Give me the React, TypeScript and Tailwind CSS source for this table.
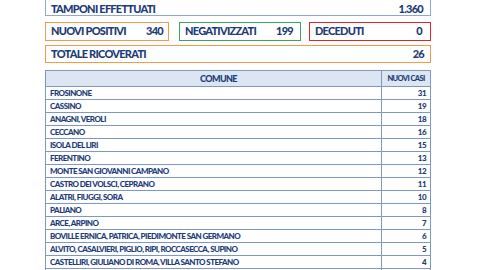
import React from "react";

const rows: [string, string][] = [
  ["FROSINONE", "31"],
  ["CASSINO", "19"],
  ["ANAGNI, VEROLI", "18"],
  ["CECCANO", "16"],
  ["ISOLA DEL LIRI", "15"],
  ["FERENTINO", "13"],
  ["MONTE SAN GIOVANNI CAMPANO", "12"],
  ["CASTRO DEI VOLSCI, CEPRANO", "11"],
  ["ALATRI, FIUGGI, SORA", "10"],
  ["PALIANO", "8"],
  ["ARCE, ARPINO", "7"],
  ["BOVILLE ERNICA, PATRICA, PIEDIMONTE SAN GERMANO", "6"],
  ["ALVITO, CASALVIERI, PIGLIO, RIPI, ROCCASECCA, SUPINO", "5"],
  ["CASTELLIRI, GIULIANO DI ROMA, VILLA SANTO STEFANO", "4"],
  ["BELMONTE CASTELLO, CASTROCIELO, COLFELICE, PICO, POFI, SANT'ELIA FIUMERAPIDO", "3"],
];

const font = { fontFamily: "Lato, 'Open Sans', sans-serif" };

export default function App() {
  return (
    <div
      className="w-[480px] h-[270px] overflow-hidden bg-white text-[#1d3b78] font-black"
      style={font}
    >
      <div className="ml-[45px] w-[386px] flex flex-col">
        <div className="mt-[-6px] h-[22px] border border-[#8ea9cf] flex items-center justify-between pt-[8px] pl-[5px] pr-[7px] text-[11px] tracking-[-0.75px]">
          <span>TAMPONI EFFETTUATI</span>
          <span>1.360</span>
        </div>
        <div className="mt-[6px] h-[19px] flex text-[11px] tracking-[-0.75px]">
          <div className="w-[124px] border border-[#f59a4a] flex items-center pl-[5px]">
            <span className="w-[95px]">NUOVI POSITIVI</span>
            <span>340</span>
          </div>
          <div className="ml-[10px] w-[122px] border border-[#3aa55e] flex items-center justify-between pl-[5px] pr-[7px]">
            <span>NEGATIVIZZATI</span>
            <span>199</span>
          </div>
          <div className="ml-[8px] w-[122px] border border-[#e0262c] flex items-center justify-between pl-[5px] pr-[8px]">
            <span>DECEDUTI</span>
            <span>0</span>
          </div>
        </div>
        <div className="mt-[4px] h-[18px] border border-[#f59a4a] flex items-center justify-between pl-[5px] pr-[6px] text-[11px] tracking-[-0.75px]">
          <span>TOTALE RICOVERATI</span>
          <span>26</span>
        </div>
        <div className="mt-[7px] border border-[#7d99c2] flex flex-col">
          <div className="h-[16px] bg-[#dce6f2] flex border-b border-[#7d99c2] text-[9px] tracking-[-0.6px]">
            <div className="flex-1 flex items-center justify-center pl-[10px]">COMUNE</div>
            <div className="w-[49px] border-l border-[#7d99c2] flex items-center justify-center text-[7.5px] tracking-[-0.6px]">
              NUOVI CASI
            </div>
          </div>
          {rows.map(([c, n], i) => (
            <div
              key={i}
              className={
                "h-[13px] flex border-b border-[#7d99c2] text-[8px] tracking-[-0.55px] " +
                (i === rows.length - 1 ? "text-[#c9cfd8]" : "")
              }
            >
              <div className="flex-1 flex items-center pl-[4px] whitespace-nowrap overflow-hidden">{c}</div>
              <div className="w-[49px] border-l border-[#7d99c2] flex items-center justify-end pr-[4px]">
                {n}
              </div>
            </div>
          ))}
        </div>
      </div>
    </div>
  );
}
